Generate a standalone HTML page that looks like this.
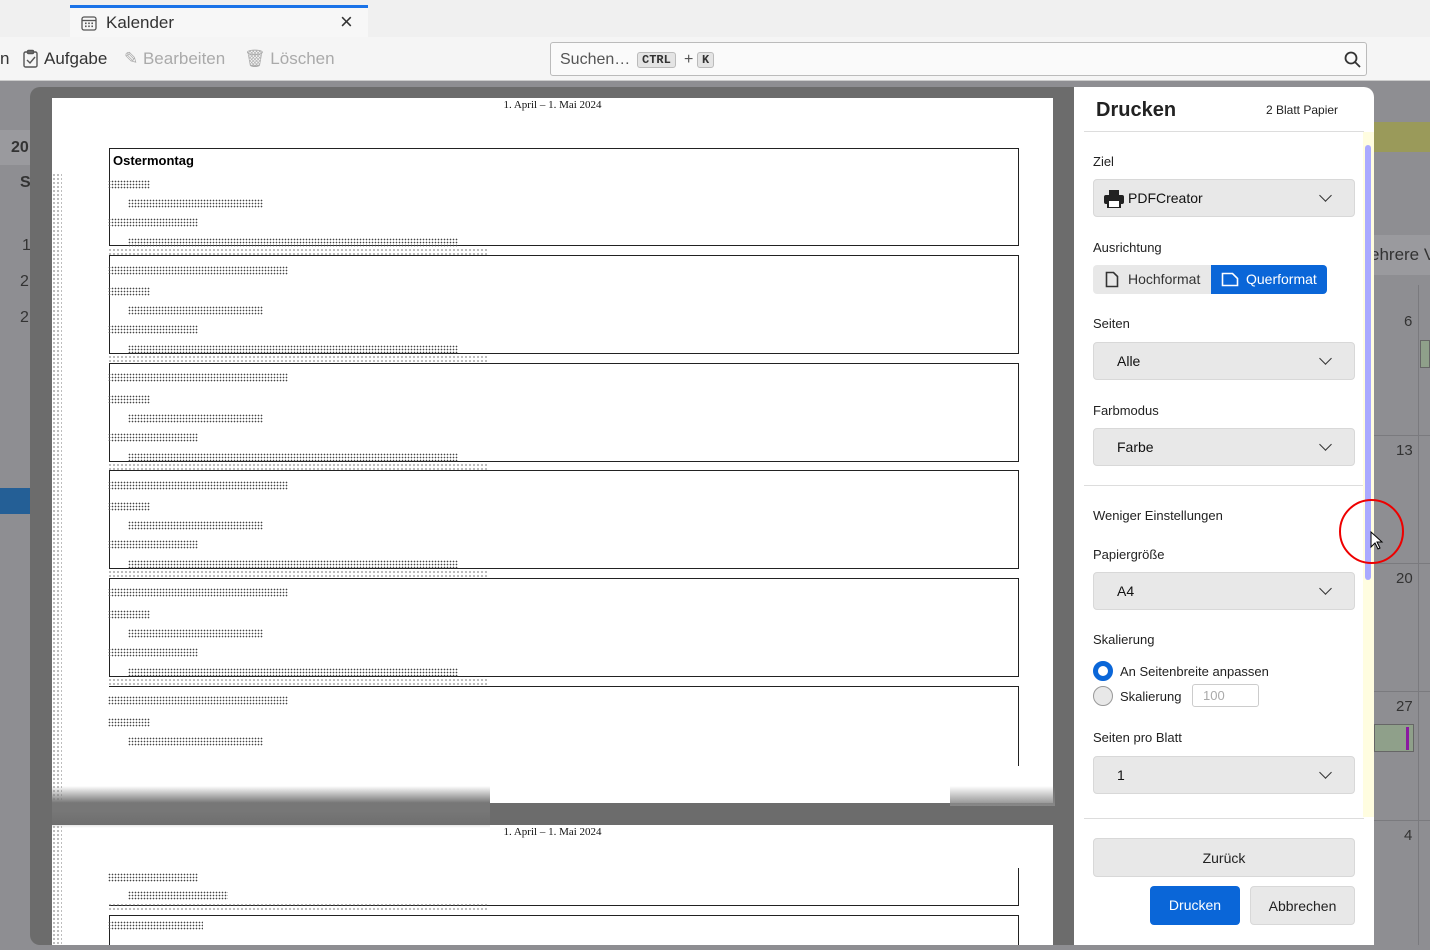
<!DOCTYPE html>
<html><head><meta charset="utf-8"><style>
*{box-sizing:border-box;margin:0;padding:0}
body{width:1430px;height:950px;overflow:hidden;font-family:"Liberation Sans",sans-serif;background:#8e8e92;position:relative}
.a{position:absolute;white-space:nowrap}
.top{left:0;top:0;width:1430px;height:37px;background:#f0f0f0}
.tab{left:70px;top:5px;width:298px;height:33px;background:#f7f7f7;border-top:3px solid #1a73e8}
.tb{left:0;top:37px;width:1430px;height:44px;background:#f5f5f5;border-bottom:1px solid #ccc}
.tbt{top:49px;font-size:17px;color:#333}
.dis{color:#aaa}
.search{left:550px;top:42px;width:817px;height:34px;border:1px solid #bbb;border-radius:3px;background:#fafafa}
.kbd{font-family:"Liberation Mono",monospace;font-size:12px;font-weight:bold;background:#e4e4e4;border:1px solid #bbb;border-radius:3px;padding:0 4px;color:#333}
.modal{left:30px;top:87px;width:1344px;height:858px;background:#6c6c6c;border-radius:10px 10px 0 10px;overflow:hidden}
.page{background:#fff;overflow:hidden}
.box{position:absolute;left:57px;width:910px;border:1px solid #222;background:#fff}
.n{position:absolute;height:9px;background:radial-gradient(circle,#444 0.7px,transparent 0.9px) 0 0/3px 3px}
.nl{position:absolute;height:9px;background:radial-gradient(circle,#666 0.6px,transparent 0.9px) 0 0/4px 4px}
.hdr{font-family:"Liberation Serif",serif;font-size:11px;color:#111}
.panel{left:1074px;top:87px;width:300px;height:858px;background:#fff;border-radius:0 10px 0 0}
.lbl{position:absolute;left:19px;font-size:13px;color:#222;white-space:nowrap}
.sel{position:absolute;left:19px;width:262px;height:38px;background:#e8e8e8;border:1px solid #d8d8d8;border-radius:4px;font-size:14px;color:#111}
.sel span{position:absolute;left:23px;top:10px}
.chev{position:absolute;right:24px;top:11px;width:9px;height:9px;border-right:1.6px solid #333;border-bottom:1.6px solid #333;transform:rotate(45deg)}
.btn{position:absolute;height:39px;border-radius:4px;font-size:14px;text-align:center;line-height:39px}
</style></head><body>
<div class="a top"></div>
<div class="a tab"><svg class="a" style="left:10px;top:6px" width="18" height="18" viewBox="0 0 18 18" fill="none" stroke="#555" stroke-width="1.3"><rect x="2" y="3" width="14" height="13" rx="2"/><line x1="2" y1="6.5" x2="16" y2="6.5"/><g fill="#555" stroke="none"><rect x="5" y="8.5" width="1.6" height="1.6"/><rect x="8.2" y="8.5" width="1.6" height="1.6"/><rect x="11.4" y="8.5" width="1.6" height="1.6"/><rect x="5" y="11.5" width="1.6" height="1.6"/><rect x="8.2" y="11.5" width="1.6" height="1.6"/><rect x="11.4" y="11.5" width="1.6" height="1.6"/></g></svg>
<span class="a" style="left:36px;top:5px;font-size:17px;color:#333">Kalender</span>
<span class="a" style="left:270px;top:1px;font-size:22px;color:#333">×</span></div>
<div class="a tb"></div>
<span class="a tbt" style="left:0">n</span>
<svg class="a" style="left:22px;top:49px" width="18" height="20" viewBox="0 0 18 20" fill="none" stroke="#555" stroke-width="1.4"><rect x="2" y="3" width="13" height="15" rx="1.5"/><rect x="5.5" y="1.5" width="6" height="3" rx="1"/><path d="M5 11l3 3 5-6"/></svg>
<span class="a tbt" style="left:44px">Aufgabe</span>
<span class="a tbt dis" style="left:124px">✎ Bearbeiten</span>
<span class="a tbt dis" style="left:244px">🗑 Löschen</span>
<div class="a search"><span class="a" style="left:9px;top:8px;font-size:16px;color:#555">Suchen…</span>
<span class="a kbd" style="left:86px;top:9px">CTRL</span><span class="a" style="left:133px;top:8px;color:#555">+</span><span class="a kbd" style="left:146px;top:9px">K</span>
<svg class="a" style="left:793px;top:8px" width="17" height="17" viewBox="0 0 17 17" fill="none" stroke="#333" stroke-width="1.8"><circle cx="7" cy="7" r="5.5"/><line x1="11" y1="11" x2="16" y2="16"/></svg></div>
<div class="a" style="left:0;top:130px;width:30px;height:35px;background:#9a9a9e"></div>
<span class="a" style="left:11px;top:139px;font-size:16px;font-weight:bold;color:#333">20</span>
<span class="a" style="left:20px;top:174px;font-size:16px;font-weight:bold;color:#333">S</span>
<span class="a" style="left:22px;top:237px;font-size:16px;color:#333">1</span>
<span class="a" style="left:20px;top:273px;font-size:16px;color:#333">2</span>
<span class="a" style="left:20px;top:309px;font-size:16px;color:#333">2</span>
<div class="a" style="left:0;top:488px;width:30px;height:26px;background:#245f96"></div>
<div class="a" style="left:1374px;top:122px;width:56px;height:30px;background:#9a9a5a"></div>
<div class="a" style="left:1374px;top:235px;width:56px;height:40px;background:#9a9a9e"></div>
<span class="a" style="left:1370px;top:245px;font-size:17px;color:#333">ehrere V</span>
<span class="a" style="left:1404px;top:313px;font-size:15px;color:#333">6</span>
<span class="a" style="left:1396px;top:442px;font-size:15px;color:#333">13</span>
<span class="a" style="left:1396px;top:570px;font-size:15px;color:#333">20</span>
<span class="a" style="left:1396px;top:698px;font-size:15px;color:#333">27</span>
<span class="a" style="left:1404px;top:827px;font-size:15px;color:#333">4</span>
<div class="a" style="left:1420px;top:340px;width:10px;height:28px;background:#8fa08a;border:1px solid #666"></div>
<div class="a" style="left:1374px;top:724px;width:40px;height:28px;background:#8fa08a;border:1px solid #666"></div>
<div class="a" style="left:1406px;top:727px;width:3px;height:23px;background:#8a1aa0"></div>
<div class="a" style="left:1418px;top:285px;width:1px;height:660px;background:#7a7a7e"></div>
<div class="a" style="left:1374px;top:435px;width:56px;height:1px;background:#7a7a7e"></div>
<div class="a" style="left:1374px;top:563px;width:56px;height:1px;background:#7a7a7e"></div>
<div class="a" style="left:1374px;top:691px;width:56px;height:1px;background:#7a7a7e"></div>
<div class="a" style="left:1374px;top:820px;width:56px;height:1px;background:#7a7a7e"></div>

<div class="a modal"></div>
<div class="a page" style="left:52px;top:98px;width:1001px;height:705px">
<div class="a hdr" style="left:0;width:1001px;text-align:center;top:1px">1. April – 1. Mai 2024</div>
<div class="box" style="top:50px;height:98px"><b class="a" style="left:3px;top:4px;font-size:13px">Ostermontag</b></div>
<div class="box" style="top:157px;height:99px"></div>
<div class="box" style="top:265px;height:99px"></div>
<div class="box" style="top:372px;height:99px"></div>
<div class="box" style="top:480px;height:99px"></div>
<div class="box" style="top:588px;height:80px;border-bottom:none;border-left:none"></div>
<div class="nl" style="left:0;top:75px;width:10px;height:630px"></div>
</div>
<div class="a page" style="left:52px;top:825px;width:1001px;height:120px">
<div class="a hdr" style="left:0;width:1001px;text-align:center;top:1px">1. April – 1. Mai 2024</div>
<div class="box" style="top:43px;height:38px;border-top:none;border-left:none"></div>
<div class="box" style="top:90px;height:40px"></div>
<div class="n" style="left:56px;top:48px;width:90px"></div>
<div class="n" style="left:76px;top:66px;width:100px"></div>
<div class="nl" style="left:56px;top:78px;width:380px"></div>
<div class="n" style="left:56px;top:96px;width:95px"></div>
<div class="nl" style="left:0;top:0;width:10px;height:120px"></div>
</div>
<div class="a" style="left:52px;top:786px;width:438px;height:42px;background:linear-gradient(#fff0,#777 40%,#777 60%,#fff0)"></div>
<div class="a" style="left:950px;top:786px;width:105px;height:20px;background:linear-gradient(#fff0,#888)"></div>

<div id="noise"></div>
<script>
var h='',tops=[148,255,363,470,578,686];
tops.forEach(function(o,i){
var L=[[108,32,42,'n'],[128,51,135,'n'],[108,70,90,'n'],[128,90,330,'n'],[108,100,380,'nl'],[108,118,180,'n']];
if(i==5)L=L.slice(0,2);
L.forEach(function(l){h+='<div class="'+l[3]+'" style="left:'+l[0]+'px;top:'+(o+l[1])+'px;width:'+l[2]+'px"></div>';});
});
document.getElementById('noise').innerHTML=h;
</script>

<div class="a panel">
<div class="a" style="left:22px;top:12px;font-size:20px;font-weight:bold;color:#222">Drucken</div>
<div class="a" style="left:192px;top:16px;font-size:12px;color:#222">2 Blatt Papier</div>
<div class="a" style="left:10px;top:44px;width:280px;height:1px;background:#ddd"></div>
<div class="lbl" style="top:67px">Ziel</div>
<div class="sel" style="top:92px"><svg class="a" style="left:10px;top:10px" width="20" height="18" viewBox="0 0 20 18" fill="#222"><rect x="5" y="0" width="10" height="5"/><rect x="0" y="5" width="20" height="9" rx="2"/><rect x="4" y="10" width="12" height="8" fill="#fff" stroke="#222" stroke-width="2"/></svg><span style="left:34px">PDFCreator</span><i class="chev"></i></div>
<div class="lbl" style="top:153px">Ausrichtung</div>
<div class="btn" style="left:19px;top:178px;width:118px;height:29px;line-height:29px;background:#e8e8e8;border-radius:4px 0 0 4px;color:#333;text-align:left;padding-left:35px">Hochformat</div>
<svg class="a" style="left:31px;top:184px" width="14" height="17" viewBox="0 0 14 17" fill="none" stroke="#333" stroke-width="1.6"><path d="M1.5 1.5h7l4 4v10h-11z"/></svg>
<div class="btn" style="left:137px;top:178px;width:116px;height:29px;line-height:29px;background:#0a66d8;border-radius:0 4px 4px 0;color:#fff;text-align:left;padding-left:35px">Querformat</div>
<svg class="a" style="left:147px;top:185px" width="18" height="15" viewBox="0 0 18 15" fill="none" stroke="#fff" stroke-width="1.6"><path d="M1.5 1.5h10l5 5v7h-15z"/></svg>
<div class="lbl" style="top:229px">Seiten</div>
<div class="sel" style="top:255px"><span>Alle</span><i class="chev"></i></div>
<div class="lbl" style="top:316px">Farbmodus</div>
<div class="sel" style="top:341px"><span>Farbe</span><i class="chev"></i></div>
<div class="a" style="left:10px;top:398px;width:280px;height:1px;background:#ddd"></div>
<div class="lbl" style="top:421px">Weniger Einstellungen</div>
<div class="lbl" style="top:460px">Papiergröße</div>
<div class="sel" style="top:485px"><span>A4</span><i class="chev"></i></div>
<div class="lbl" style="top:545px">Skalierung</div>
<div class="a" style="left:19px;top:574px;width:20px;height:20px;border-radius:50%;border:5px solid #0a66d8;background:#fff"></div>
<div class="lbl" style="left:46px;top:577px">An Seitenbreite anpassen</div>
<div class="a" style="left:19px;top:599px;width:20px;height:20px;border-radius:50%;border:1px solid #999;background:#e8e8e8"></div>
<div class="lbl" style="left:46px;top:602px">Skalierung</div>
<div class="a" style="left:118px;top:597px;width:67px;height:23px;border:1px solid #ccc;border-radius:3px;font-size:13px;color:#aaa;padding:3px 10px">100</div>
<div class="lbl" style="top:643px">Seiten pro Blatt</div>
<div class="sel" style="top:669px"><span>1</span><i class="chev"></i></div>
<div class="a" style="left:10px;top:731px;width:280px;height:1px;background:#ddd"></div>
<div class="btn" style="left:19px;top:751px;width:262px;background:#e8e8e8;border:1px solid #d8d8d8;color:#222">Zurück</div>
<div class="btn" style="left:76px;top:799px;width:90px;background:#0a66d8;color:#fff">Drucken</div>
<div class="btn" style="left:176px;top:799px;width:105px;background:#e8e8e8;border:1px solid #d8d8d8;color:#222">Abbrechen</div>
<div class="a" style="left:289px;top:45px;width:11px;height:685px;background:#fffde0"></div>
<div class="a" style="left:291px;top:58px;width:6px;height:435px;background:#aaaaff;border-radius:3px"></div>
</div>
<div class="a" style="left:1339px;top:499px;width:65px;height:65px;border:2px solid #e00;border-radius:50%"></div>
<svg class="a" style="left:1370px;top:531px" width="14" height="20" viewBox="0 0 14 20"><path d="M1 1v15l4-4 3 6 2-1-3-6h5z" fill="#fff" stroke="#000" stroke-width="1"/></svg>
</body></html>
